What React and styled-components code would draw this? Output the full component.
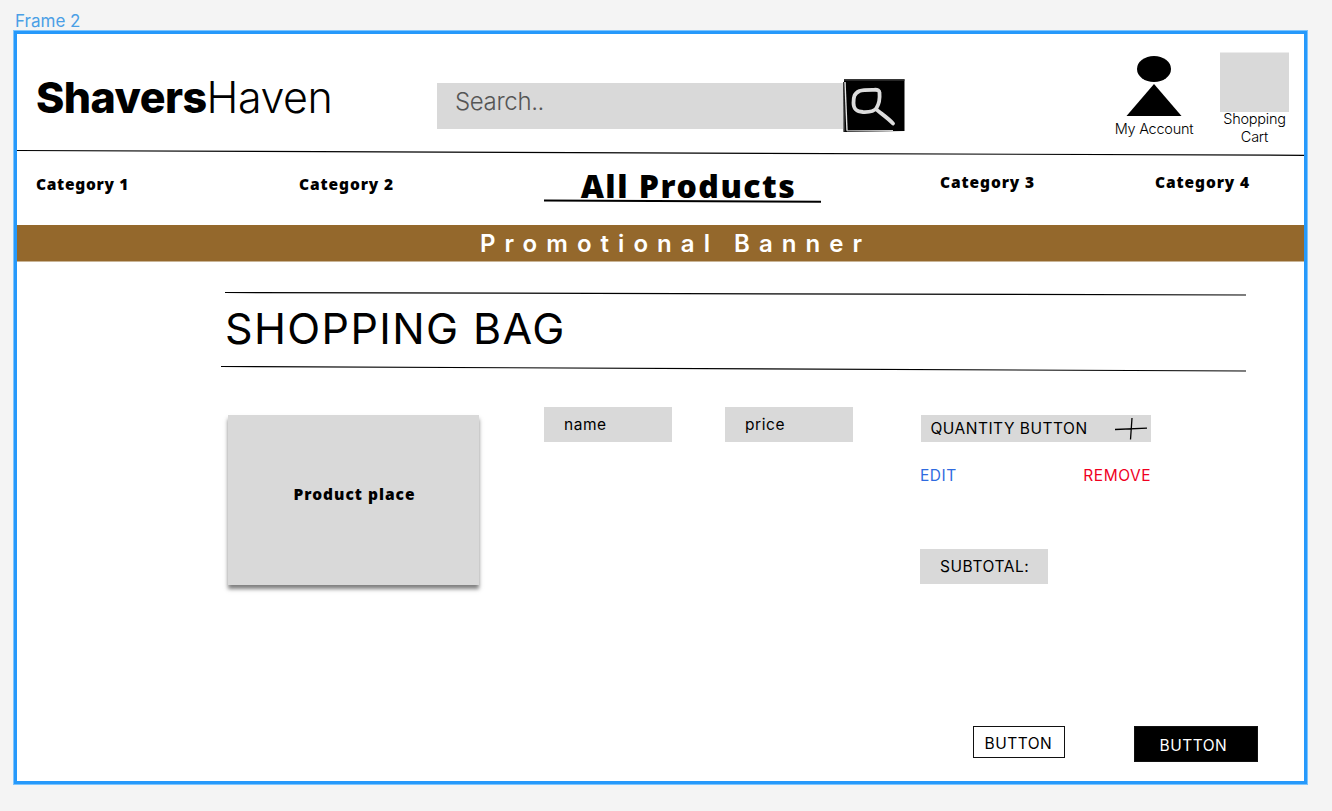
import React from 'react';
import styled, { createGlobalStyle } from 'styled-components';

const GlobalStyle = createGlobalStyle`
  * { box-sizing: border-box; }
  body {
    margin: 0;
    background: #f4f4f4;
    font-family: Inter, "Liberation Sans", sans-serif;
    color: #000;
  }
  svg { display: block; }
`;

const Canvas = styled.div`
  width: 1332px;
  height: 811px;
  padding: 11px 0 0 13px;
  overflow: hidden;
`;

const FrameLabel = styled.div`
  height: 19px;
  padding: 1px 0 0 2px;
  font-size: 17px;
  line-height: 19px;
  color: #4a9fe6;
`;

const Frame = styled.main`
  width: 1295px;
  height: 755px;
  border: 1px solid #7cc4fd;
  background: #fff;
  box-shadow: inset 0 0 0 3px #2699fb;
  padding: 3px;
`;

const Header = styled.header`
  display: flex;
  align-items: flex-start;
  height: 115px;
  padding-left: 19px;
`;

const Logo = styled.h1`
  margin: 37px 0 0;
  width: 401px;
  font-size: 43px;
  line-height: 52px;
  font-weight: 300;
  white-space: nowrap;
  letter-spacing: -0.45px;
  b { font-weight: 800; letter-spacing: -0.55px; }
`;

const SearchForm = styled.div`
  display: flex;
  align-items: flex-start;
  margin-top: 45px;
  width: 468px;
`;

const SearchField = styled.div`
  width: 406px;
  height: 46px;
  margin-top: 4px;
  padding-left: 18px;
  background: #d9d9d9;
  color: #555;
  font-size: 24px;
  font-weight: 300;
  line-height: 38px;
  letter-spacing: -0.35px;
`;

const Account = styled.div`
  display: flex;
  flex-direction: column;
  align-items: center;
  width: 100px;
  margin: 21px 0 0 199px;
`;

const Cart = styled.div`
  display: flex;
  flex-direction: column;
  align-items: center;
  width: 69px;
  margin: 18px 0 0 16px;
`;

const CartBox = styled.div`
  width: 69px;
  height: 60px;
  background: linear-gradient(#ececec 1px, #d9d9d9 1px);
`;

const Caption = styled.div`
  margin-top: ${(p) => p.$top}px;
  font-size: 14.5px;
  font-weight: 300;
  line-height: 17.5px;
  text-align: center;
  letter-spacing: -0.25px;
  white-space: nowrap;
`;

const Nav = styled.nav`
  display: flex;
  align-items: flex-start;
  height: 68px;
  padding-left: 19px;
  font-family: "Noto Sans", sans-serif;
  font-weight: 900;
`;

const Category = styled.a`
  width: ${(p) => p.$width}px;
  margin-top: ${(p) => p.$top}px;
  font-size: 15.5px;
  line-height: 20px;
  letter-spacing: ${(p) => p.$spacing || 0.9}px;
  white-space: nowrap;
`;

const Current = styled.div`
  display: flex;
  flex-direction: column;
  align-items: center;
  width: 277px;
  margin-right: 119px;
  padding: 11px 0 0;
  font-size: 32px;
  line-height: 36px;
  letter-spacing: 1.5px;
  white-space: nowrap;
  svg { margin-top: -5px; }
  span { padding-left: 12px; }
`;

const Banner = styled.div`
  height: 37px;
  padding-left: 463px;
  background: linear-gradient(#94682c 36px, #c9b496 36px);
  color: #fff;
  font-size: 24px;
  font-weight: 600;
  line-height: 37px;
  letter-spacing: 9.05px;
  white-space: nowrap;
`;

const BagHeading = styled.section`
  height: 109px;
  padding: 28px 0 0 204px;
  > svg:first-child { margin-left: 4px; }
`;

const Title = styled.h2`
  margin: 4px 0 0 4px;
  height: 62px;
  font-size: 43px;
  font-weight: 400;
  line-height: 52px;
  letter-spacing: 1.4px;
  white-space: nowrap;
`;

const BagRow = styled.section`
  display: flex;
  align-items: flex-start;
  height: 355px;
  padding: 36px 0 0 211px;
`;

const ProductCard = styled.div`
  width: 251px;
  height: 170px;
  margin: 8px 65px 0 0;
  background: #d9d9d9;
  box-shadow: 0 4px 4px rgba(0, 0, 0, 0.5);
  font-family: "Noto Sans", sans-serif;
  font-size: 15.5px;
  font-weight: 900;
  line-height: 158px;
  letter-spacing: 1px;
  text-indent: 2px;
  text-align: center;
`;

const Tag = styled.div`
  width: 128px;
  height: 35px;
  padding-left: 20px;
  margin-right: ${(p) => p.$gap || 0}px;
  background: #d9d9d9;
  font-size: 15.5px;
  line-height: 35px;
  letter-spacing: 0.55px;
`;

const Controls = styled.div`
  width: 231px;
  padding-top: 8px;
`;

const Quantity = styled.div`
  display: flex;
  align-items: center;
  justify-content: space-between;
  height: 27px;
  margin-left: 1px;
  padding: 0 4px 0 9.5px;
  background: #d9d9d9;
  font-size: 15.5px;
  letter-spacing: 0.5px;
  white-space: nowrap;
`;

const Links = styled.div`
  display: flex;
  justify-content: space-between;
  margin: 24px 0 63px;
  font-size: 15.5px;
  line-height: 20px;
  letter-spacing: 0.5px;
`;

const Link = styled.a`
  color: ${(p) => p.$color};
`;

const Actions = styled.footer`
  display: flex;
  align-items: flex-start;
  justify-content: flex-end;
  gap: 69px;
  padding-right: 46px;
`;

const Button = styled.button`
  width: ${(p) => (p.$solid ? 124 : 92)}px;
  height: ${(p) => (p.$solid ? 36 : 32)}px;
  padding: ${(p) => (p.$solid ? '2px 0 0 24.5px' : '2px 0 0 10.5px')};
  border: 1px solid #111;
  border-radius: 0;
  background: ${(p) => (p.$solid ? '#000' : '#fff')};
  color: ${(p) => (p.$solid ? '#fff' : '#000')};
  font: 400 15.5px Inter, sans-serif;
  letter-spacing: 0.5px;
  text-align: left;
`;

const Stroke = ({ width, height, from, to, weight = 1.2 }) => (
  <svg width={width} height={height} viewBox={`0 0 ${width} ${height}`}>
    <line x1="0" y1={from} x2={width} y2={to} stroke="#000" strokeWidth={weight} />
  </svg>
);

const SearchIcon = () => (
  <svg width="62" height="54" viewBox="0 0 62 54">
    <path d="M1 .3H61.500V52L.5 53Z" fill="#000" />
    <path d="M1 1H61.500" stroke="#333" strokeWidth="1.5" />
    <path d="M.5 3L1.500 52.500" stroke="#333" strokeWidth="1.3" />
    <path d="M2 3L4 51.800" fill="none" stroke="#e6e6e6" strokeWidth="1.4" />
    <path d="M4 51.800L50 51.500" fill="none" stroke="#d0d0d0" strokeWidth="1" />
    <path
      d="M34 10.800C28 11 21 10.500 16.500 12C11 14.500 10.500 18 10.500 24C10.500 30 13 32.500 20 33C27 33.300 31 32.500 33.500 29C36 25 37 20 36.500 14C36.500 11.500 35 10.500 31 10.800M33 30C37 34 44 38 50 44.500"
      fill="none" stroke="#dcdcdc" strokeWidth="3.8" strokeLinecap="round" strokeLinejoin="round"
    />
  </svg>
);

const PersonIcon = () => (
  <svg width="56" height="61" viewBox="0 0 56 61">
    <ellipse cx="28" cy="14" rx="17" ry="13" />
    <path d="M28 29L55.500 61H.5Z" />
  </svg>
);

const PlusIcon = () => (
  <svg width="32" height="24" viewBox="0 0 32 24" fill="none" stroke="#000" strokeWidth="1.3">
    <path d="M0 12.500L32 11.200M17 1L15.500 22.500" />
  </svg>
);

export default function App() {
  return (
    <Canvas>
      <GlobalStyle />
      <FrameLabel>Frame 2</FrameLabel>
      <Frame>
        <Header>
          <Logo><b>Shavers</b>Haven</Logo>
          <SearchForm>
            <SearchField>Search..</SearchField>
            <SearchIcon />
          </SearchForm>
          <Account>
            <PersonIcon />
            <Caption $top={4}>My Account</Caption>
          </Account>
          <Cart>
            <CartBox />
            <Caption $top={-2}>Shopping<br />Cart</Caption>
          </Cart>
        </Header>
        <Stroke width={1287} height={8} from={1.5} to={6.3} />
        <Nav>
          <Category $width={263} $top={17} $spacing={0.7}>Category 1</Category>
          <Category $width={245} $top={17}>Category 2</Category>
          <Current>
            <span>All Products</span>
            <Stroke width={277} height={5} from={1.5} to={2.7} weight={2} />
          </Current>
          <Category $width={215} $top={15}>Category 3</Category>
          <Category $width={100} $top={15}>Category 4</Category>
        </Nav>
        <Banner>Promotional Banner</Banner>
        <BagHeading>
          <Stroke width={1021} height={8} from={2.5} to={5} />
          <Title>SHOPPING BAG</Title>
          <Stroke width={1025} height={8} from={2.5} to={7} />
        </BagHeading>
        <BagRow>
          <ProductCard>Product place</ProductCard>
          <Tag $gap={53}>name</Tag>
          <Tag $gap={67}>price</Tag>
          <Controls>
            <Quantity>QUANTITY BUTTON<PlusIcon /></Quantity>
            <Links>
              <Link $color="#2f6be0">EDIT</Link>
              <Link $color="#f0001f">REMOVE</Link>
            </Links>
            <Tag>SUBTOTAL:</Tag>
          </Controls>
        </BagRow>
        <Actions>
          <Button>BUTTON</Button>
          <Button $solid>BUTTON</Button>
        </Actions>
      </Frame>
    </Canvas>
  );
}
